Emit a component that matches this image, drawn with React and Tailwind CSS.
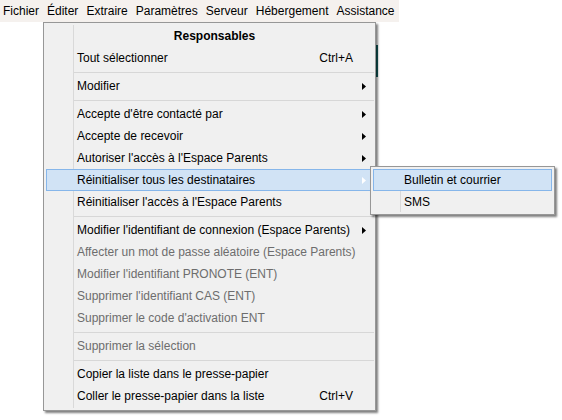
import React from 'react';

const menuBar = ['Fichier', 'Éditer', 'Extraire', 'Paramètres', 'Serveur', 'Hébergement', 'Assistance'];

const items = [
  { type: 'header', label: 'Responsables' },
  { label: 'Tout sélectionner', shortcut: 'Ctrl+A' },
  { type: 'sep' },
  { label: 'Modifier', sub: true },
  { type: 'sep' },
  { label: "Accepte d'être contacté par", sub: true },
  { label: 'Accepte de recevoir', sub: true },
  { label: "Autoriser l'accès à l'Espace Parents", sub: true },
  { label: 'Réinitialiser tous les destinataires', sub: true, active: true },
  { label: "Réinitialiser l'accès à l'Espace Parents" },
  { type: 'sep' },
  { label: "Modifier l'identifiant de connexion (Espace Parents)", sub: true },
  { label: 'Affecter un mot de passe aléatoire (Espace Parents)', disabled: true },
  { label: "Modifier l'identifiant PRONOTE (ENT)", disabled: true },
  { label: "Supprimer l'identifiant CAS (ENT)", disabled: true },
  { label: "Supprimer le code d'activation ENT", disabled: true },
  { type: 'sep' },
  { label: 'Supprimer la sélection', disabled: true },
  { type: 'sep' },
  { label: 'Copier la liste dans le presse-papier' },
  { label: 'Coller le presse-papier dans la liste', shortcut: 'Ctrl+V' },
];

const Arrow = ({ white }) => (
  <svg width="4" height="7" viewBox="0 0 4 7">
    <polygon points="0,0 4,3.5 0,7" fill={white ? '#ffffff' : '#000000'} />
  </svg>
);

const MenuRow = ({ item }) => {
  if (item.type === 'sep') {
    return (
      <div className="h-[6px] flex items-center pl-[30px] pr-[1px]">
        <div className="h-px w-full bg-[#d7d7d7]" />
      </div>
    );
  }
  if (item.type === 'header') {
    return (
      <div className="h-[22px] flex items-center justify-center pl-[30px] pr-[20px] font-bold text-black">
        {item.label}
      </div>
    );
  }
  return (
    <div
      className={
        'mx-[2px] h-[22px] flex items-center border ' +
        (item.active ? 'bg-[#d1e3f5] border-[#86b6ea]' : 'border-transparent')
      }
    >
      <span className={'flex-1 pl-[30px] whitespace-nowrap ' + (item.disabled ? 'text-[#6d6d6d]' : 'text-black')}>
        {item.label}
      </span>
      {item.shortcut && <span className="text-black">{item.shortcut}</span>}
      <span className="w-[19px] flex items-center pl-[9px]">
        {item.sub && <Arrow white={item.active} />}
      </span>
    </div>
  );
};

export default function App() {
  return (
    <div className="relative w-[562px] h-[420px] bg-white overflow-hidden text-[12px] font-['Liberation_Sans',Arial,sans-serif]">
      {/* menu bar */}
      <div className="flex h-[22px] w-[399px] items-center bg-[#f5f1ee] pl-[0px] text-black">
        {menuBar.map((m, i) => (
          <span key={m} className={i === 0 ? 'pl-[3px] pr-[4px]' : 'px-[4px]'}>
            {m}
          </span>
        ))}
      </div>

      {/* bits of the window behind the popup */}
      <div className="absolute left-[368px] top-[45px] w-[10px] h-[32px] bg-[#115e5e]" />

      {/* main popup */}
      <div className="absolute left-[43px] top-[22px] w-[333px] border border-[#979797] bg-[#f0f0f0] pt-[2px] pb-[3px] shadow-[2px_2px_2px_rgba(0,0,0,0.5)]">
        <div className="absolute left-[29px] top-[2px] bottom-[2px] w-px bg-[#d9d9d9]" />
        <div className="relative">
          {items.map((it, i) => (
            <MenuRow key={i} item={it} />
          ))}
        </div>
      </div>

      {/* submenu */}
      <div className="absolute left-[370px] top-[166px] w-[185px] border border-[#979797] bg-[#f0f0f0] pt-[2px] pb-[1px] shadow-[2px_2px_2px_rgba(0,0,0,0.5)]">
        <div className="absolute left-[29px] top-[2px] bottom-[2px] w-px bg-[#d9d9d9]" />
        <div className="relative">
          <MenuRow item={{ label: 'Bulletin et courrier', active: true }} />
          <MenuRow item={{ label: 'SMS' }} />
        </div>
      </div>
    </div>
  );
}
